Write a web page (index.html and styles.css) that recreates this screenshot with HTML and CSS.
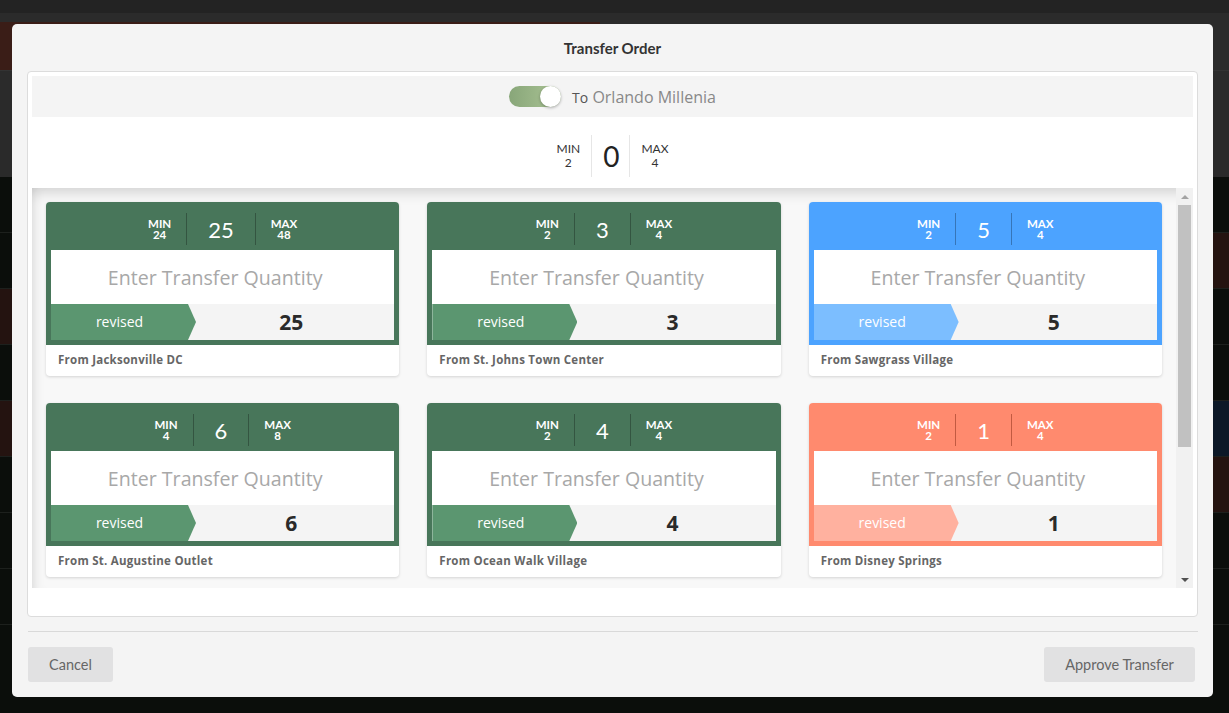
FILE: index.html
```html
<!DOCTYPE html>
<html>
<head>
<meta charset="utf-8">
<link rel="stylesheet" href="styles.css">
</head>
<body>
<div class="backdrop">
  <div class="bd-row h13"><div class="l c-top"></div><div class="r c-top"></div></div>
  <div class="bd-row h9"><div class="l c-bar"></div><div class="r c-bar"></div></div>
  <div class="bd-row h48"><div class="l c-red2"></div><div class="r c-bar"></div></div>
  <div class="bd-row h30 line"><div class="l c-bar"></div><div class="r c-bar"></div></div>
  <div class="bd-row h77"><div class="l c-gray"></div><div class="r c-gray"></div></div>
  <div class="bd-row h56 dline"><div class="l c-dark"></div><div class="r c-dark"></div></div>
  <div class="bd-row h56 dline"><div class="l c-dark"></div><div class="r c-red"></div></div>
  <div class="bd-row h56 dline"><div class="l c-red"></div><div class="r c-dark"></div></div>
  <div class="bd-row h56 dline"><div class="l c-dark"></div><div class="r c-dark"></div></div>
  <div class="bd-row h56 dline"><div class="l c-red"></div><div class="r c-blue"></div></div>
  <div class="bd-row h56 dline"><div class="l c-dark"></div><div class="r c-red"></div></div>
  <div class="bd-row h56 dline"><div class="l c-dark"></div><div class="r c-dark"></div></div>
  <div class="bd-row h56 dline"><div class="l c-dark"></div><div class="r c-dark"></div></div>
  <div class="bd-row h56"><div class="l c-dark"></div><div class="r c-dark"></div></div>
</div>

<div class="modal">
  <div class="modal-title">Transfer Order</div>
  <div class="panel">
    <div class="dest">
      <div class="toggle"><span class="knob"></span></div>
      <div class="dest-text"><span class="to">To</span> Orlando Millenia</div>
    </div>
    <div class="summary">
      <div class="sum-stat"><div>MIN</div><div>2</div></div>
      <div class="sum-val">0</div>
      <div class="sum-stat"><div>MAX</div><div>4</div></div>
    </div>
    <div class="scroll-area">
      <div class="cards">
        <div class="card green">
          <div class="card-top">
            <div class="card-head">
              <div class="stat min"><div>MIN</div><div>24</div></div>
              <div class="val">25</div>
              <div class="stat max"><div>MAX</div><div>48</div></div>
            </div>
            <div class="input">Enter Transfer Quantity</div>
            <div class="rev-row"><div class="rev">revised</div><div class="rev-val">25</div></div>
          </div>
          <div class="card-foot">From Jacksonville DC</div>
        </div>
        <div class="card green">
          <div class="card-top">
            <div class="card-head">
              <div class="stat min"><div>MIN</div><div>2</div></div>
              <div class="val">3</div>
              <div class="stat max"><div>MAX</div><div>4</div></div>
            </div>
            <div class="input">Enter Transfer Quantity</div>
            <div class="rev-row"><div class="rev">revised</div><div class="rev-val">3</div></div>
          </div>
          <div class="card-foot">From St. Johns Town Center</div>
        </div>
        <div class="card blue">
          <div class="card-top">
            <div class="card-head">
              <div class="stat min"><div>MIN</div><div>2</div></div>
              <div class="val">5</div>
              <div class="stat max"><div>MAX</div><div>4</div></div>
            </div>
            <div class="input">Enter Transfer Quantity</div>
            <div class="rev-row"><div class="rev">revised</div><div class="rev-val">5</div></div>
          </div>
          <div class="card-foot">From Sawgrass Village</div>
        </div>
        <div class="card green">
          <div class="card-top">
            <div class="card-head">
              <div class="stat min"><div>MIN</div><div>4</div></div>
              <div class="val">6</div>
              <div class="stat max"><div>MAX</div><div>8</div></div>
            </div>
            <div class="input">Enter Transfer Quantity</div>
            <div class="rev-row"><div class="rev">revised</div><div class="rev-val">6</div></div>
          </div>
          <div class="card-foot">From St. Augustine Outlet</div>
        </div>
        <div class="card green">
          <div class="card-top">
            <div class="card-head">
              <div class="stat min"><div>MIN</div><div>2</div></div>
              <div class="val">4</div>
              <div class="stat max"><div>MAX</div><div>4</div></div>
            </div>
            <div class="input">Enter Transfer Quantity</div>
            <div class="rev-row"><div class="rev">revised</div><div class="rev-val">4</div></div>
          </div>
          <div class="card-foot">From Ocean Walk Village</div>
        </div>
        <div class="card orange">
          <div class="card-top">
            <div class="card-head">
              <div class="stat min"><div>MIN</div><div>2</div></div>
              <div class="val">1</div>
              <div class="stat max"><div>MAX</div><div>4</div></div>
            </div>
            <div class="input">Enter Transfer Quantity</div>
            <div class="rev-row"><div class="rev">revised</div><div class="rev-val">1</div></div>
          </div>
          <div class="card-foot">From Disney Springs</div>
        </div>
      </div>
      <div class="scrollbar">
        <div class="sb-btn"><span class="arrow-up"></span></div>
        <div class="sb-track"><div class="sb-thumb"></div></div>
        <div class="sb-btn"><span class="arrow-down"></span></div>
      </div>
    </div>
  </div>
  <div class="modal-sep"></div>
  <div class="modal-foot">
    <button class="btn">Cancel</button>
    <button class="btn">Approve Transfer</button>
  </div>
</div>
</body>
</html>
```

FILE: styles.css
```css
* { box-sizing: border-box; }
html, body { margin: 0; padding: 0; }
body {
  width: 1229px;
  height: 713px;
  overflow: hidden;
  position: relative;
  background: #0b0e0b;
  font-family: "Open Sans", "Liberation Sans", sans-serif;
}

/* dimmed application behind the modal */
.backdrop { display: flex; flex-direction: column; height: 713px; }
.bd-row { display: flex; flex: none; }
.bd-row .l { width: 600px; }
.bd-row .r { flex: 1; }
.h13 { height: 13px; }
.h9 { height: 9px; }
.h48 { height: 48px; }
.h30 { height: 30px; }
.h77 { height: 77px; }
.h56 { height: 56px; }
.line { border-top: 1px solid #333; }
.dline { border-bottom: 1px solid #1d201d; }
.c-top { background: #232323; }
.c-bar { background: #2b2b2b; }
.c-gray { background: #2a2a2a; }
.c-red2 { background: #3a1d17; }
.c-dark { background: #0b0e0b; }
.c-red { background: #241310; }
.c-blue { background: #0c1827; }

/* modal */
.modal {
  position: absolute;
  left: 12px;
  top: 24px;
  width: 1201px;
  height: 673px;
  background: #f4f4f4;
  border-radius: 5px;
  padding: 0 15px 15px;
  display: flex;
  flex-direction: column;
}
.modal-title {
  height: 47px;
  display: flex;
  align-items: center;
  justify-content: center;
  font: 700 15px "Lato", sans-serif;
  color: #333;
  padding-top: 1px;
}
.panel {
  height: 546px;
  flex: none;
  background: #fff;
  border: 1px solid #dcdcdc;
  border-radius: 4px;
  padding: 4px;
  display: flex;
  flex-direction: column;
}
.dest {
  height: 41px;
  flex: none;
  background: #f4f4f4;
  display: flex;
  align-items: center;
  justify-content: center;
  gap: 11px;
}
.toggle {
  width: 52px;
  height: 21px;
  border-radius: 11px;
  background: linear-gradient(90deg, #88a679, #acc596);
  position: relative;
}
.knob {
  position: absolute;
  right: 0;
  top: 0;
  width: 21px;
  height: 21px;
  border-radius: 50%;
  background: #fff;
  box-shadow: 0 1px 3px rgba(0,0,0,.3);
}
.dest-text {
  font: 400 16px "Open Sans", sans-serif;
  color: #888;
}
.dest-text .to { font-size: 14px; color: #555; }

.summary {
  height: 71px;
  flex: none;
  display: flex;
  align-items: center;
  justify-content: center;
  padding-top: 7px;
}
.sum-stat {
  font: 400 12px/14px "Lato", sans-serif;
  color: #333;
  text-align: center;
}
.sum-val {
  font: 400 28px "Lato", sans-serif;
  color: #222;
  height: 42px;
  display: flex;
  align-items: center;
  padding: 0 10px 0 11px;
  margin: 0 11px;
  border-left: 1px solid #e6e6e6;
  border-right: 1px solid #e6e6e6;
}

.scroll-area {
  height: 400px;
  flex: none;
  display: flex;
  background: #f8f8f8;
  box-shadow: inset 0 10px 14px -6px rgba(0,0,0,.16), inset 12px 0 14px -12px rgba(0,0,0,.12);
}
.cards {
  flex: 1;
  overflow: hidden;
  display: grid;
  grid-template-columns: repeat(3, 1fr);
  align-content: start;
  gap: 27px 28px;
  padding: 14px 14px 0 14px;
}
.card {
  background: #fff;
  border-radius: 4px;
  box-shadow: 0 1px 3px rgba(0,0,0,.15);
  overflow: hidden;
}
.green { --c: #48765a; --r: #5b9670; --s: rgba(0,0,0,.28); }
.blue { --c: #4ca3ff; --r: #7cbeff; --s: rgba(0,0,0,.28); }
.orange { --c: #ff8a6e; --r: #ffb19f; --s: rgba(120,30,10,.45); }
.card-top {
  background: var(--c);
  padding: 0 5px 5px;
}
.card-head {
  height: 48px;
  padding: 11px 0 5px;
  display: flex;
  justify-content: center;
  align-items: stretch;
}
.stat {
  font: 700 11.5px/11.5px "Lato", sans-serif;
  color: #fff;
  text-align: center;
  display: flex;
  flex-direction: column;
  justify-content: center;
}
.stat.min { padding-right: 15px; }
.stat.max { padding-left: 15px; }
.val {
  font: 400 22px "Lato", sans-serif;
  color: #fff;
  display: flex;
  align-items: center;
  padding: 0 21px;
  border-left: 1px solid var(--s);
  border-right: 1px solid var(--s);
}
.input {
  height: 54px;
  background: #fff;
  display: flex;
  align-items: center;
  justify-content: center;
  padding-right: 15px;
  font: 400 19.6px "Open Sans", sans-serif;
  color: #a8a8a8;
}
.rev-row {
  height: 36px;
  background: #f4f4f4;
  display: flex;
  align-items: center;
}
.rev {
  width: 145px;
  height: 36px;
  flex: none;
  background: var(--r);
  clip-path: polygon(0 0, 137px 0, 145px 50%, 137px 100%, 0 100%);
  color: #fff;
  font: 400 14px "Open Sans", sans-serif;
  display: flex;
  align-items: center;
  justify-content: center;
  padding-right: 8px;
  padding-bottom: 1px;
}
.rev-val {
  flex: 1;
  margin-left: -8px;
  text-align: center;
  font: 700 21px "Open Sans", sans-serif;
  color: #2a2a2a;
}
.card-foot {
  height: 31px;
  display: flex;
  align-items: center;
  padding-left: 12px;
  padding-bottom: 2px;
  font: 700 11.5px "Open Sans", sans-serif;
  letter-spacing: 0.25px;
  color: #666;
}

.scrollbar {
  width: 17px;
  flex: none;
  background: #f1f1f1;
  display: flex;
  flex-direction: column;
}
.sb-btn {
  height: 17px;
  display: flex;
  align-items: center;
  justify-content: center;
}
.arrow-up {
  width: 0; height: 0;
  border-left: 4px solid transparent;
  border-right: 4px solid transparent;
  border-bottom: 4px solid #a3a3a3;
}
.arrow-down {
  width: 0; height: 0;
  border-left: 4px solid transparent;
  border-right: 4px solid transparent;
  border-top: 4px solid #505050;
}
.sb-track { flex: 1; padding: 0 2px; }
.sb-thumb { height: 242px; background: #c1c1c1; }

.modal-sep {
  height: 1px;
  background: #d9d9d9;
  margin: 14px 0 15px 1px;
  flex: none;
}
.modal-foot {
  display: flex;
  justify-content: space-between;
  padding: 0 3px 0 1px;
}
.btn {
  height: 35px;
  border: none;
  border-radius: 3px;
  background: #e1e1e2;
  color: #666;
  font: 400 14.5px "Lato", sans-serif;
  padding: 0;
}
.btn:first-child { width: 85px; }
.btn:last-child { width: 151px; }
```
